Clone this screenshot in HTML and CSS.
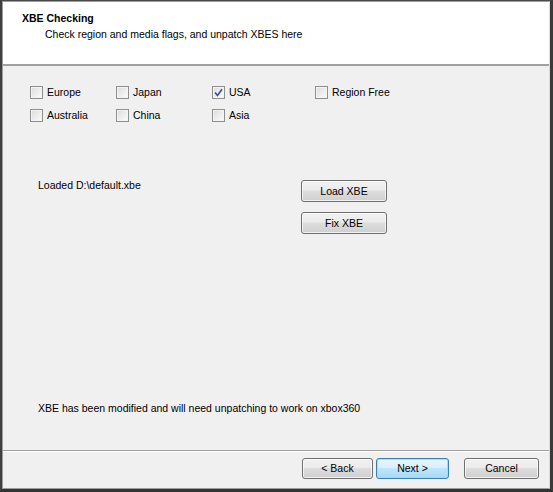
FILE: index.html
```
<!DOCTYPE html>
<html lang="en">
  <head>
    <meta charset="UTF-8" />
    <title>XBE Checking</title>
    <link rel="stylesheet" href="styles.css">
  </head>
  <body>
    <div class="window">
      <div class="wizard">
        <header class="wizard__header">
          <h1>XBE Checking</h1>
          <p>Check region and media flags, and unpatch XBES here</p>
        </header>

        <main class="wizard__page">
          <div class="regions">
            <label class="check"><span class="check__box"></span>Europe</label>
            <label class="check"><span class="check__box"></span>Japan</label>
            <label class="check"><span class="check__box is-checked"><svg viewBox="0 0 9 9" width="9" height="9"><path d="M1 4.5 L3.5 7.5 L8 1.2" fill="none" stroke="#3d4e8c" stroke-width="1.6"/></svg></span>USA</label>
            <label class="check"><span class="check__box"></span>Region Free</label>
            <label class="check"><span class="check__box"></span>Australia</label>
            <label class="check"><span class="check__box"></span>China</label>
            <label class="check"><span class="check__box"></span>Asia</label>
          </div>

          <div class="loader">
            <p class="loader__status">Loaded D:\default.xbe</p>
            <div class="loader__actions">
              <button class="button button--wide">Load XBE</button>
              <button class="button button--wide">Fix XBE</button>
            </div>
          </div>

          <p class="wizard__message">XBE has been modified and will need unpatching to work on xbox360</p>
        </main>

        <footer class="wizard__footer">
          <button class="button">&lt; Back</button>
          <button class="button" data-type="default">Next &gt;</button>
          <button class="button button--cancel">Cancel</button>
        </footer>
      </div>
    </div>
  </body>
</html>
```

FILE: styles.css
```
* {
  margin: 0;
  box-sizing: border-box;
}

body {
  font-family: "Liberation Sans", Arial, sans-serif;
  font-size: 10.5px;
  color: #000;
  background: #2b2f36;
}

/* outer window frame */
.window {
  width: 553px;
  height: 492px;
  border-top: 1px solid #4a4a4a;
  border-left: 2px solid #3f3f3f;
  border-right: 3px solid #3a3a3a;
  border-bottom: 3px solid #333;
  background: #2b2b2b;
}

.wizard {
  height: 100%;
  display: flex;
  flex-direction: column;
  border: 1px solid #9c9c9c;
  border-right-color: #dcdcdc;
  background: #f0f0f0;
}

.wizard__header {
  height: 64px;
  padding: 9px 0 0 19px;
  background: #fff;
  border-bottom: 2px solid #a0a0a0;
}

.wizard__header h1 {
  font-size: 10.5px;
  font-weight: 700;
  line-height: 14px;
}

.wizard__header p {
  margin-top: 3px;
  padding-left: 23px;
  line-height: 13px;
}

.wizard__page {
  flex: 1;
  display: flex;
  flex-direction: column;
  padding: 20px 0 0 27px;
  border-bottom: 1px solid #a0a0a0;
  box-shadow: 0 1px 0 #fff;
}

.regions {
  display: grid;
  grid-template-columns: 86px 96px 103px auto;
  row-gap: 10px;
}

.check {
  display: flex;
  align-items: center;
  gap: 4px;
  height: 13px;
  line-height: 13px;
}

.check__box {
  width: 13px;
  height: 13px;
  display: grid;
  place-items: center;
  border: 1px solid #8e8f8f;
  background: linear-gradient(135deg, #dcdcdc, #fbfbfb);
  box-shadow: inset 0 0 0 1px #f4f4f4;
}

.loader {
  display: grid;
  grid-template-columns: 263px auto;
  margin-top: 56px;
  padding-left: 8px;
}

.loader__status {
  line-height: 13px;
  margin-top: 1px;
}

.loader__actions {
  display: flex;
  flex-direction: column;
  gap: 10px;
  margin-top: 2px;
}

.wizard__message {
  margin-top: auto;
  margin-bottom: 35px;
  padding-left: 8px;
  line-height: 13px;
}

.wizard__footer {
  height: 37px;
  display: flex;
  align-items: flex-start;
  padding: 7px 0 0 299px;
  gap: 3px;
}

.button {
  font: inherit;
  width: 71px;
  height: 21px;
  color: #000;
  border: 1px solid #707070;
  border-radius: 3px;
  background: linear-gradient(#f2f2f2 0%, #ebebeb 45%, #dddddd 50%, #cfcfcf 100%);
  box-shadow: inset 0 0 0 1px rgb(255 255 255 / 0.7);
  line-height: 1;
}

.button--wide {
  width: 86px;
  height: 22px;
}

.button[data-type="default"] {
  width: 73px;
  border-color: #3c7fb1;
  background: linear-gradient(#eaf6fd 0%, #d9f0fc 45%, #bee6fd 50%, #a7d9f5 100%);
  box-shadow: inset 0 0 0 1px #9ddff9;
}

.button--cancel {
  width: 75px;
  margin-left: 12px;
}
```
